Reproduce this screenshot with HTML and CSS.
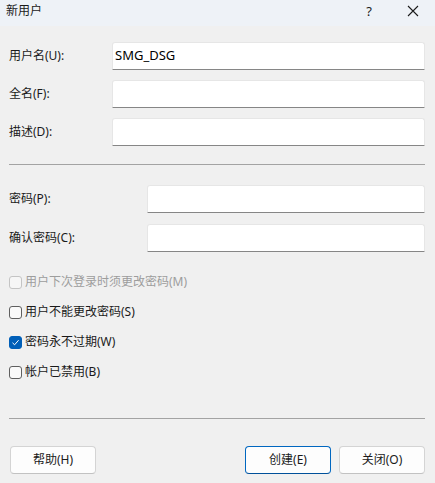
FILE: index.html
```html
<!DOCTYPE html>
<html lang="zh-CN">
<head>
<meta charset="utf-8">
<title>新用户</title>
<link rel="stylesheet" href="styles.css">
</head>
<body>
<div class="dialog">
  <div class="titlebar">
    <span class="title">新用户</span>
    <span class="help">?</span>
    <span class="close">
      <svg width="12" height="12" viewBox="0 0 12 12"><path d="M1 1L11 11M11 1L1 11" stroke="#1b1b1b" stroke-width="1.1" fill="none"/></svg>
    </span>
  </div>
  <div class="main">
    <div class="group group-a">
      <div class="row"><span class="label">用户名(U):</span><div class="field"><span class="value">SMG_DSG</span></div></div>
      <div class="row"><span class="label">全名(F):</span><div class="field"></div></div>
      <div class="row"><span class="label">描述(D):</span><div class="field"></div></div>
    </div>
    <div class="sep sep-top"></div>
    <div class="group group-b">
      <div class="row"><span class="label">密码(P):</span><div class="field"></div></div>
      <div class="row"><span class="label">确认密码(C):</span><div class="field"></div></div>
    </div>
    <div class="checks">
      <div class="check disabled"><span class="box"></span><span>用户下次登录时须更改密码(M)</span></div>
      <div class="check"><span class="box"></span><span>用户不能更改密码(S)</span></div>
      <div class="check"><span class="box checked"><svg width="9" height="9" viewBox="0 0 9 9"><path d="M1.5 4.8L3.6 6.8L7.6 2.2" stroke="#fff" stroke-width="1" fill="none"/></svg></span><span>密码永不过期(W)</span></div>
      <div class="check"><span class="box"></span><span>帐户已禁用(B)</span></div>
    </div>
    <div class="sep sep-bottom"></div>
    <div class="buttons">
      <button class="btn">帮助(H)</button>
      <span class="spacer"></span>
      <button class="btn primary">创建(E)</button>
      <button class="btn">关闭(O)</button>
    </div>
  </div>
</div>
</body>
</html>
```

FILE: styles.css
```css
* { box-sizing: border-box; }
html, body {
  margin: 0;
  padding: 0;
  background: #f0f0f0;
}
body {
  font-family: "Noto Sans", "Noto Sans CJK SC", sans-serif;
  font-size: 12px;
  color: #1a1a1a;
}
.dialog {
  width: 435px;
  height: 483px;
  background: #f0f0f0;
}
.titlebar {
  height: 26px;
  background: #eef2f7;
  display: flex;
  align-items: center;
  padding: 0 0 5px 6px;
}
.title {
  flex: 1;
  line-height: 16px;
}
.help {
  width: 14px;
  text-align: center;
  font-size: 13px;
  line-height: 16px;
  margin-right: 31px;
}
.close {
  display: flex;
  width: 12px;
  margin-right: 16px;
}
.main {
  display: flex;
  flex-direction: column;
  padding: 16px 10px 0 9px;
}
.group {
  display: flex;
  flex-direction: column;
  gap: 10px;
}
.group-b { gap: 11px; }
.row {
  display: flex;
  align-items: center;
  height: 28px;
}
.label {
  line-height: 16px;
}
.group-a .label { width: 103px; }
.group-b .label { width: 138px; }
.field {
  flex: 1;
  height: 28px;
  background: #ffffff;
  border: 1px solid #e6e6e6;
  border-bottom: 1px solid #868686;
  border-radius: 3px 3px 0 0;
  padding: 4px 0 0 2px;
}
.value {
  font-size: 13px;
  line-height: 16px;
  color: #000;
}
.sep {
  height: 1px;
  background: #a3a3a3;
  flex: none;
}
.sep-top {
  margin-top: 18px;
  margin-bottom: 20px;
}
.checks {
  margin-top: 15px;
}
.check {
  display: flex;
  align-items: center;
  height: 30px;
  line-height: 16px;
}
.check.disabled { color: #9d9d9d; }
.box {
  width: 13px;
  height: 13px;
  border: 1px solid #5f5f5f;
  border-radius: 3px;
  background: #fafafa;
  margin-right: 3px;
  display: flex;
  align-items: center;
  justify-content: center;
}
.check.disabled .box { border-color: #c4c4c4; background: #f6f6f6; }
.box.checked {
  background: #005fb8;
  border-color: #005fb8;
}
.sep-bottom {
  margin-top: 31px;
}
.buttons {
  display: flex;
  gap: 8px;
  margin-top: 27px;
  padding-left: 1px;
}
.spacer { flex: 1; }
.btn {
  width: 86px;
  height: 28px;
  font: inherit;
  color: #1a1a1a;
  background: #fdfdfd;
  border: 1px solid #d4d4d4;
  border-bottom-color: #c2c2c2;
  border-radius: 4px;
  padding: 0;
  line-height: 16px;
}
.btn.primary {
  border-color: #0067c0;
  border-bottom-color: #00509a;
}
```
